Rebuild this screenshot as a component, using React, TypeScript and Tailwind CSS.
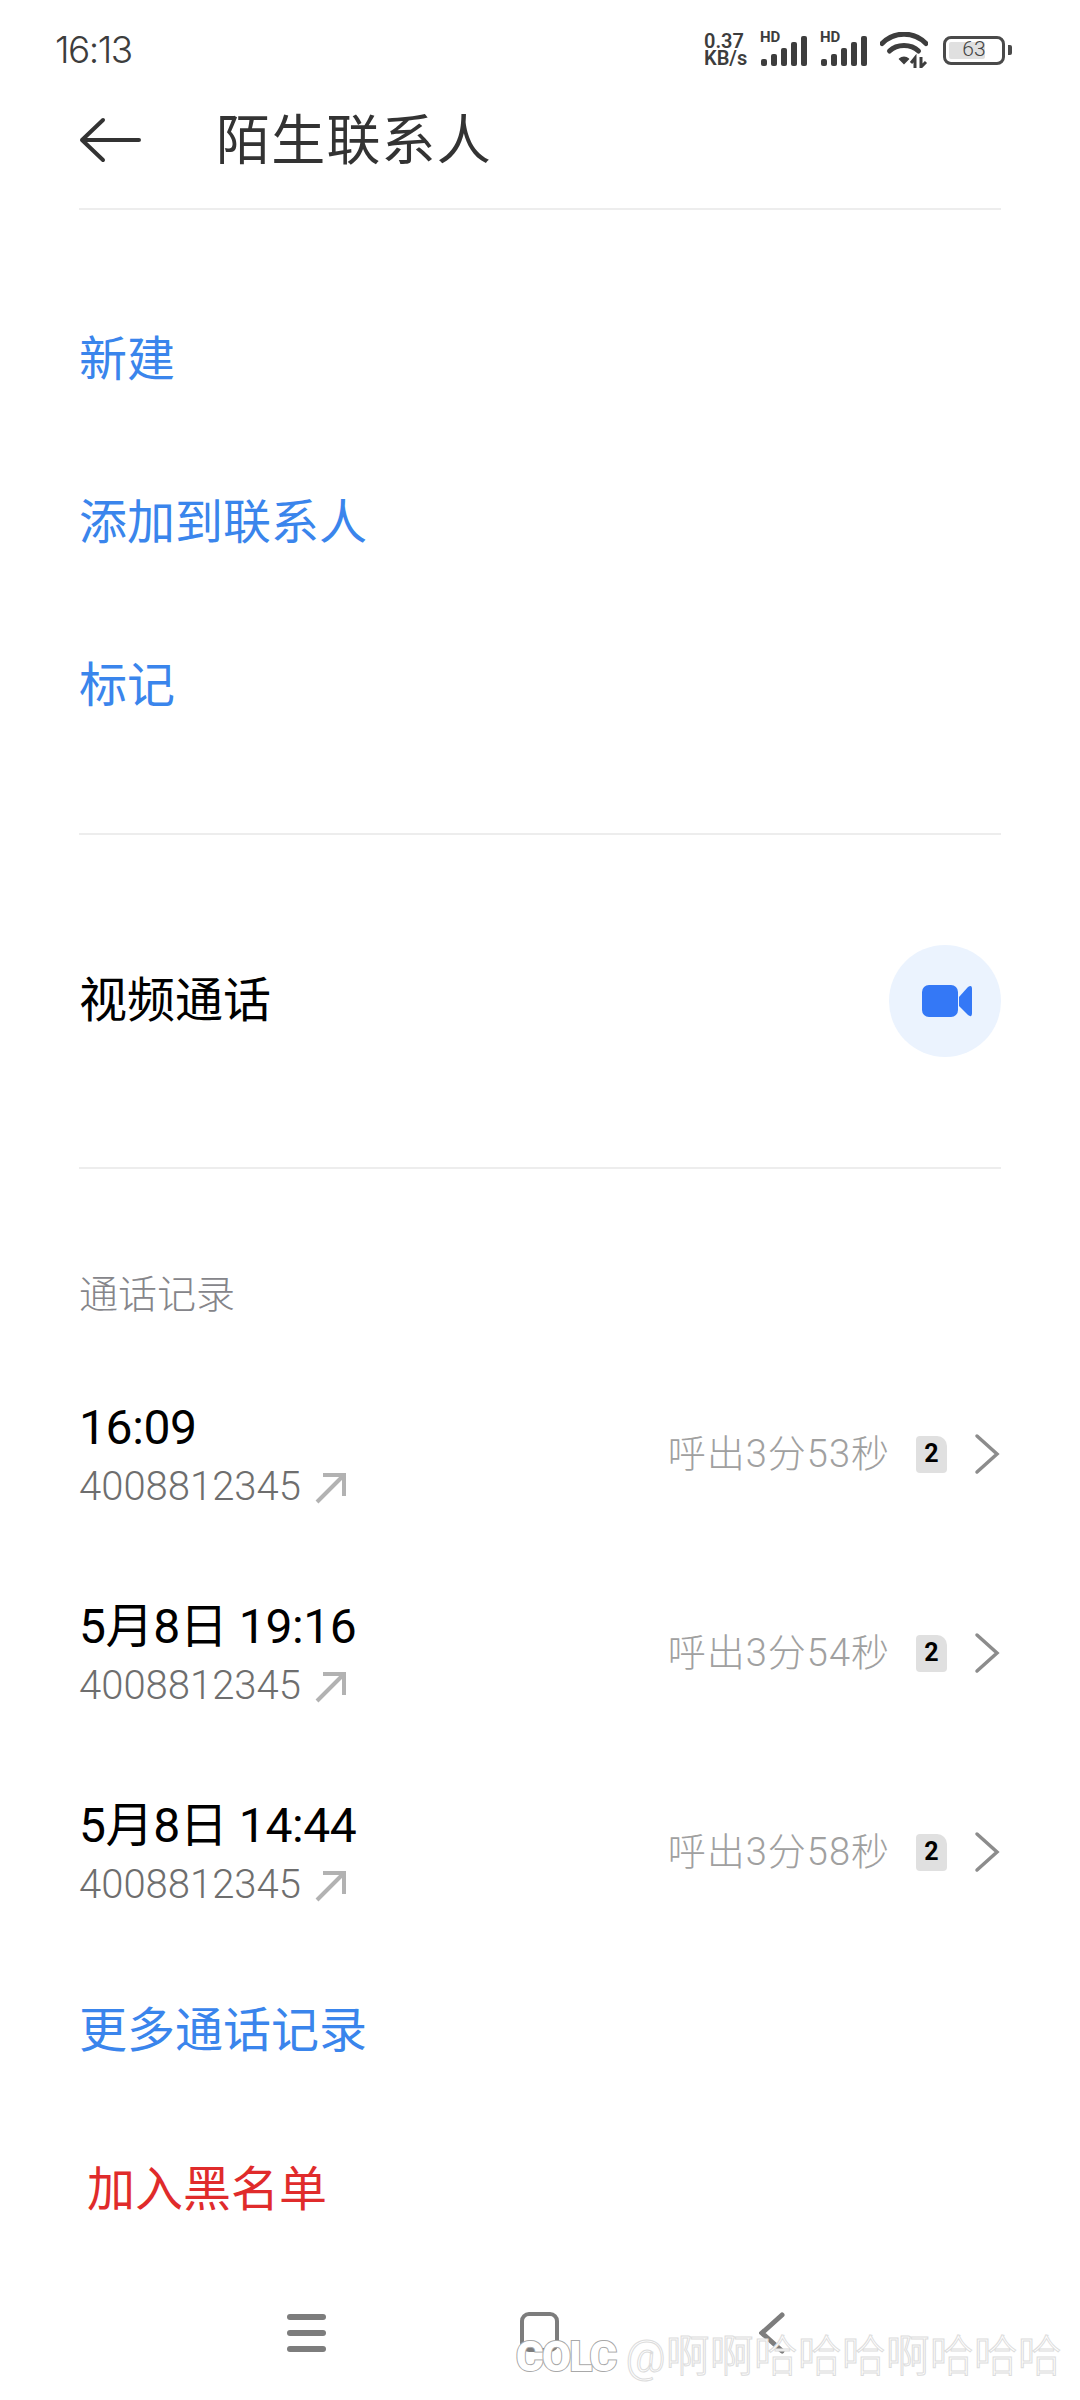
import React from 'react';

const cjk = "font-['Roboto','Noto_Sans_CJK_SC',sans-serif]";

const calls = [
  { time: '16:09', duration: '呼出3分53秒' },
  { time: '5月8日 19:16', duration: '呼出3分54秒' },
  { time: '5月8日 14:44', duration: '呼出3分58秒' },
];

const SignalIcon: React.FC = () => (
  <div className="relative w-[48px] h-[34px]">
    <span className="absolute left-0 top-[-3px] text-[15px] leading-[14px] font-bold text-[#3d3d3d] font-['Roboto',sans-serif]">HD</span>
    <svg width="48" height="34" viewBox="0 0 48 34" className="absolute left-0 top-0" fill="#3d3d3d">
      <rect x="1" y="26" width="6" height="7" rx="2" />
      <rect x="11" y="21" width="6" height="12" rx="2" />
      <rect x="21" y="15" width="6" height="18" rx="2" />
      <rect x="31" y="9" width="6" height="24" rx="2" />
      <rect x="41" y="3" width="6" height="30" rx="2" />
    </svg>
  </div>
);

const StatusBar: React.FC = () => (
  <div className="h-[100px] pl-[55px] pr-[68px] flex items-center justify-between text-[#3d3d3d]">
    <span className="text-[37px] font-['Inter',sans-serif] font-light tracking-[-1.5px]">16:13</span>
    <div className="flex items-center">
      <div className="w-[52px] text-[20px] leading-[17px] font-semibold font-['Roboto',sans-serif]">
        0.37<br />KB/s
      </div>
      <div className="flex gap-[12px] ml-[4px]">
        <SignalIcon />
        <SignalIcon />
      </div>
      <svg width="48" height="36" viewBox="0 0 48 36" className="ml-[12px]" fill="none" stroke="#3d3d3d" strokeWidth="5" strokeLinecap="round">
        <path d="M2 11.5 C14 -1 34 -1 46 11.5" />
        <path d="M9.5 19 C17 11.5 31 11.5 38.500 19" />
        <path d="M20 27 L24 31 L28 27 C26 25 22 25 20 27 Z" fill="#3d3d3d" strokeWidth="2" />
        <path d="M35 36 V26 L31 31 M41 25 V35 L46 30" strokeWidth="3" strokeLinecap="butt" />
      </svg>
      <div className="ml-[15px] w-[62px] h-[29px] border-[3px] border-[#4a4a4a] rounded-[8px] p-[3px] relative">
        <div className="w-[36px] h-full bg-[#e0e0e0] rounded-[2px]" />
        <span className="absolute inset-0 flex items-center justify-center text-[21px] font-light text-[#444] font-['Roboto',sans-serif]">63</span>
      </div>
      <div className="ml-[3px] w-[4px] h-[10px] rounded-r-[2px] bg-[#4a4a4a]" />
    </div>
  </div>
);

const CallRow: React.FC<{ time: string; duration: string }> = ({ time, duration }) => (
  <div className="h-[199px] flex items-center justify-between">
    <div className="flex flex-col pb-[3px]">
      <span className="text-[48px] leading-[56px] tracking-[-0.4px] text-black">{time}</span>
      <div className="flex items-center h-[40px] mt-[11px]">
        <span className="text-[40px] leading-[40px] font-light text-[#6e6e6e]">4008812345</span>
        <svg width="32" height="32" viewBox="0 0 32 32" className="ml-[14px] mt-[2px]" fill="none" stroke="#b2b2b2" strokeWidth="4">
          <path d="M2 30 L29 3 M8 3 H29 V24" />
        </svg>
      </div>
    </div>
    <div className="flex items-center pb-[1px]">
      <span className="text-[38px] tracking-[1px] font-light text-[#a0a0a0]">{duration}</span>
      <div className="ml-[26px] w-[31px] h-[37px] bg-[#e0e0e0] rounded-[4px] rounded-tr-[10px] flex items-center justify-center text-[25px] font-bold text-black">2</div>
      <svg width="26" height="42" viewBox="0 0 26 42" className="ml-[27px]" fill="none" stroke="#8c8c8c" strokeWidth="3.500" strokeLinecap="round">
        <path d="M3 3 L23 21 L3 39" />
      </svg>
    </div>
  </div>
);

const App: React.FC = () => {
  return (
    <div className={`relative w-[1080px] h-[2400px] bg-white overflow-hidden ${cjk}`}>
      <StatusBar />

      <div className="mx-[79px] h-[110px] border-b-2 border-[#ededed]">
        <div className="flex items-center h-[80px]">
          <svg width="62" height="46" viewBox="0 0 62 46" fill="none" stroke="#333" strokeWidth="4" strokeLinecap="round" strokeLinejoin="round">
            <path d="M60 23 H3 M24 3 L3 23 L24 43" />
          </svg>
          <h1 className="ml-[75px] pt-[3px] text-[54px] text-[#333] font-normal tracking-[1.2px]">陌生联系人</h1>
        </div>
      </div>

      <div className="mx-[79px] pt-[68px] pb-[66px] border-b-2 border-[#ededed] text-[48px] text-[#3a85ec]">
        <div className="h-[163px] flex items-center">新建</div>
        <div className="h-[163px] flex items-center">添加到联系人</div>
        <div className="h-[163px] flex items-center">标记</div>
      </div>

      <div className="mx-[79px] h-[334px] border-b-2 border-[#ededed] flex items-center justify-between">
        <span className="text-[48px] text-black">视频通话</span>
        <div className="w-[112px] h-[112px] rounded-full bg-[#ebf3fe] flex items-center justify-center">
          <svg width="50" height="32" viewBox="0 0 50 32" fill="#3478f6" className="ml-[4px]">
            <rect x="0" y="0" width="36" height="32" rx="7" />
            <path d="M37 12 L46 2 Q50 -1 50 4 V28 Q50 33 46 30 L37 21 Z" />
          </svg>
        </div>
      </div>

      <div className="mx-[79px] h-[186px] pt-[100px]">
        <span className="block text-[39px] leading-[52px] font-light text-[#85858a]">通话记录</span>
      </div>

      <div className="ml-[79px] mr-[80px]">
        {calls.map((call) => (
          <CallRow key={call.time} time={call.time} duration={call.duration} />
        ))}
      </div>

      <div className="mx-[79px] h-[158px] flex items-center text-[48px] text-[#3a85ec]">更多通话记录</div>
      <div className="mx-[87px] h-[160px] flex items-center text-[48px] text-[#e02b2b]">加入黑名单</div>

      <div className="flex items-start justify-between pl-[287px] pr-[295px] pt-[42px]">
        <div className="flex flex-col gap-[10px] w-[39px] pt-[2px]">
          <div className="h-[6px] rounded-full bg-[#7d7d7d]" />
          <div className="h-[6px] rounded-full bg-[#7d7d7d]" />
          <div className="h-[6px] rounded-full bg-[#7d7d7d]" />
        </div>
        <div className="w-[39px] h-[40px] ml-[-6px] border-[4px] border-[#7d7d7d] rounded-[9px]" />
        <svg width="26" height="42" viewBox="0 0 26 42" fill="none" stroke="#7d7d7d" strokeWidth="5" strokeLinecap="round">
          <path d="M23 3 L3 21 L23 39" />
        </svg>
      </div>

      {/* watermark sits over the nav bar */}
      <div className="absolute left-[516px] top-[2332px] flex items-center">
        <span className="text-[42px] leading-[50px] font-black tracking-[-1.5px] text-white [-webkit-text-stroke:2px_#a8a8a8] [paint-order:stroke_fill] font-['Roboto',sans-serif]">COLC</span>
        <span className="ml-[10px] text-[44px] leading-[50px] font-light text-white [-webkit-text-stroke:1px_#dcdcdc]">@啊啊哈哈哈啊哈哈哈</span>
      </div>
    </div>
  );
};

export default App;
